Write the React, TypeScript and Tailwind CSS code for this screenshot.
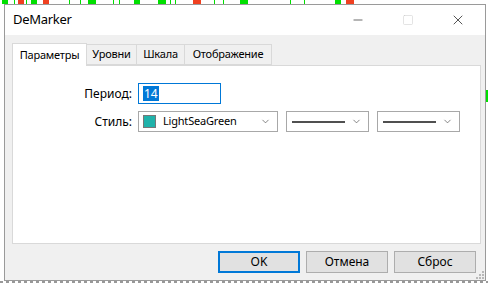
import { ChevronDown, Minus, Square, X } from "lucide-react";

const font = { fontFamily: '"Noto Sans", "Liberation Sans", sans-serif' };

const tabs = [
  { label: "Параметры", w: "w-[75px]" },
  { label: "Уровни", w: "w-[50px]" },
  { label: "Шкала", w: "w-[48px]" },
  { label: "Отображение", w: "w-[87px]" },
];

// candle marks along the top edge of the chart behind the dialog
const candles = [
  { x: 2, c: "bg-[#00e000]", w: 6 },
  { x: 18, c: "bg-[#f04020]", w: 6 },
  { x: 31, c: "bg-[#00e000]", w: 6 },
  { x: 43, c: "bg-[#f04020]", w: 6 },
  { x: 88, c: "bg-[#00e000]", w: 8 },
  { x: 134, c: "bg-[#00e000]", w: 6 },
  { x: 158, c: "bg-[#00e000]", w: 8 },
  { x: 193, c: "bg-[#f04020]", w: 8 },
  { x: 240, c: "bg-[#00e000]", w: 8 },
  { x: 335, c: "bg-[#00e000]", w: 6 },
  { x: 346, c: "bg-[#f04020]", w: 8 },
];
const wicks = [6, 14, 26, 34, 69, 80, 113, 119, 170, 175, 214, 223, 290, 304];

function LineSelect({ className }: { className: string }) {
  return (
    <div
      className={`flex h-[21px] items-center border border-[#a8a8a8] bg-white pl-[5px] pr-[6px] ${className}`}
    >
      <div className="h-[2px] w-[53px] bg-[#505050]" />
      <div className="flex-1" />
      <ChevronDown size={11} strokeWidth={1.5} className="text-[#505050]" />
    </div>
  );
}

export default function App() {
  return (
    <div
      className="relative h-[283px] w-[488px] overflow-hidden bg-white text-[12px] text-black"
      style={font}
    >
      {wicks.map((x) => (
        <div key={x} className="absolute top-0 h-[4px] w-px bg-[#00e000]" style={{ left: x }} />
      ))}
      {candles.map((k) => (
        <div
          key={k.x}
          className={`absolute top-0 h-[4px] ${k.c}`}
          style={{ left: k.x, width: k.w }}
        />
      ))}
      <div className="absolute right-0 top-[90px] h-[12px] w-[2px] bg-[#00e000]" />
      <div className="absolute bottom-0 left-0 h-[2px] w-full bg-[repeating-linear-gradient(90deg,#555_0px,#555_3px,transparent_3px,transparent_6px)] opacity-60" />

      <div className="relative ml-[4px] mt-[4px] flex h-[277px] w-[482px] flex-col border border-[#9a9a9a] bg-[#f0f0f0]">
        {/* title bar */}
        <div className="flex h-[30px] shrink-0 items-center bg-white">
          <div className="pl-[8px] text-[13px] tracking-[-0.3px]">DeMarker</div>
          <div className="flex-1" />
          <div className="flex w-[50px] justify-center pr-[4px]">
            <Minus size={14} strokeWidth={1} className="text-black" />
          </div>
          <div className="flex w-[50px] justify-center pr-[4px]">
            <Square size={12} strokeWidth={1} className="text-[#c8c8c8]" />
          </div>
          <div className="flex w-[50px] justify-center pr-[4px]">
            <X size={16} strokeWidth={1} className="text-black" />
          </div>
        </div>

        {/* tabs */}
        <div className="flex pl-[7px] pr-[4px] pt-[8px] text-[11px] tracking-[-0.2px]">
          {tabs.map((t, i) =>
            i === 0 ? (
              <div
                key={t.label}
                className={`z-10 -mb-px flex h-[23px] items-center justify-center border border-b-0 border-[#d9d9d9] bg-white ${t.w}`}
              >
                {t.label}
              </div>
            ) : (
              <div
                key={t.label}
                className={`mt-[1px] flex h-[21px] items-center justify-center border border-l-0 border-[#d9d9d9] bg-[#f0f0f0] ${t.w}`}
              >
                {t.label}
              </div>
            )
          )}
        </div>

        {/* tab panel */}
        <div className="ml-[7px] mr-[4px] h-[179px] border border-[#d9d9d9] bg-white pt-[17px]">
          <div className="flex items-center">
            <div className="w-[119px] text-right">Период:</div>
            <div className="ml-[6px] flex h-[21px] w-[83px] items-center border border-[#0078d7] px-[4px]">
              <span className="bg-[#0078d7] px-[1px] leading-[15px] text-white">14</span>
            </div>
          </div>
          <div className="mt-[7px] flex items-center">
            <div className="w-[119px] text-right">Стиль:</div>
            <div className="ml-[6px] flex h-[21px] w-[140px] items-center border border-[#a8a8a8] bg-white pl-[4px] pr-[6px]">
              <div className="h-[13px] w-[13px] border border-[#777] bg-[#20b2aa]" />
              <span className="ml-[7px] text-[11px] tracking-[-0.2px]">LightSeaGreen</span>
              <div className="flex-1" />
              <ChevronDown size={11} strokeWidth={1.5} className="text-[#505050]" />
            </div>
            <LineSelect className="ml-[8px] w-[83px]" />
            <LineSelect className="ml-[8px] w-[83px]" />
          </div>
        </div>

        {/* buttons */}
        <div className="flex justify-end gap-[6px] pr-[9px] pt-[7px]">
          <button className="h-[22px] w-[82px] border-2 border-[#0078d7] bg-[#e1e1e1]">
            OK
          </button>
          <button className="h-[22px] w-[82px] border border-[#adadad] bg-[#e1e1e1]">
            Отмена
          </button>
          <button className="h-[22px] w-[82px] border border-[#adadad] bg-[#e1e1e1]">
            Сброс
          </button>
        </div>

        {/* size grip */}
        <div className="absolute bottom-[1px] right-[1px] grid grid-cols-3 gap-[1px]">
          {[0, 0, 1, 0, 1, 1, 1, 1, 1].map((v, i) => (
            <div key={i} className={`h-[2px] w-[2px] ${v ? "bg-[#b8b8b8]" : ""}`} />
          ))}
        </div>
      </div>
    </div>
  );
}
